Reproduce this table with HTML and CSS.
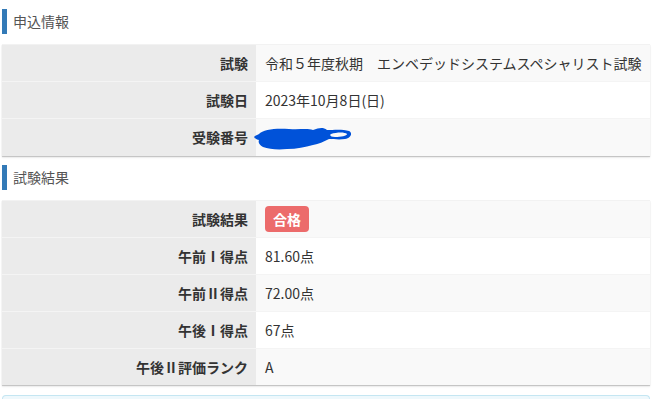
FILE: index.html
```html
<!DOCTYPE html>
<html lang="ja">
<head>
<meta charset="utf-8">
<title>申込情報</title>
<link rel="stylesheet" href="styles.css">
</head>
<body>
<div class="page">
  <h2 class="section-title">申込情報</h2>
  <table class="info-table">
    <tr><th>試験</th><td>令和５年度秋期　エンベデッドシステムスペシャリスト試験</td></tr>
    <tr><th>試験日</th><td>2023年10月8日(日)</td></tr>
    <tr><th>受験番号</th><td class="redacted-cell"><svg class="redact" width="100" height="26" viewBox="0 0 100 26"><path d="M6 9 C10 4 24 3 36 4 C46 5 54 3 60 5 C66 3 70 2 74 5 C80 5 90 4 96 6 C100 8 98 13 92 14 C86 15 80 14 76 14 C70 17 66 19 60 20 C52 22 44 24 34 24 C24 25 16 24 10 22 C6 20 5 17 6 15 C2 14 0 12 2 11 C3 10 5 10 6 9 Z M78 9 C76 10 78 12 82 12 C88 12 94 11 94 9 C92 7 84 7 78 9 Z" fill="#0052d9" fill-rule="evenodd"/></svg></td></tr>
  </table>

  <h2 class="section-title">試験結果</h2>
  <table class="info-table">
    <tr><th>試験結果</th><td><span class="badge">合格</span></td></tr>
    <tr><th>午前Ⅰ得点</th><td>81.60点</td></tr>
    <tr><th>午前Ⅱ得点</th><td>72.00点</td></tr>
    <tr><th>午後Ⅰ得点</th><td>67点</td></tr>
    <tr><th>午後Ⅱ評価ランク</th><td>A</td></tr>
  </table>

  <div class="notice"></div>
</div>
</body>
</html>
```

FILE: styles.css
```css
* { box-sizing: border-box; }
html, body {
  margin: 0;
  padding: 0;
  background: #ffffff;
}
body {
  font-family: "Noto Sans CJK JP", "Noto Sans", sans-serif;
  font-size: 14px;
  color: #333333;
}
.page {
  padding: 0 2px;
}
.section-title {
  margin: 9px 0 10px 0;
  height: 25px;
  line-height: 25px;
  border-left: 5px solid #337ab7;
  padding-left: 6px;
  font-size: 14px;
  font-weight: normal;
  color: #555555;
}
.info-table {
  width: 648px;
  border-collapse: collapse;
  box-shadow: 0 1px 1px rgba(0,0,0,0.18), 0 2px 2px rgba(0,0,0,0.06);
}
.info-table th,
.info-table td {
  height: 37px;
  padding: 0;
  vertical-align: middle;
  border-top: 1px solid #f4f4f4;
}
.info-table tr:first-child th,
.info-table tr:first-child td {
  border-top: 1px solid #f2f2f2;
}
.info-table th {
  width: 254px;
  background: #ebebeb;
  text-align: right;
  padding-right: 8px;
  font-weight: bold;
  color: #333333;
}
.info-table td {
  background: #ffffff;
  padding-left: 9px;
  text-align: left;
}
.info-table tr:nth-child(odd) td {
  background: #f9f9f9;
}
.redacted-cell {
  line-height: 0;
}
.redact {
  display: inline-block;
  vertical-align: middle;
  margin-left: -12px;
  margin-top: 2px;
}
.badge {
  display: inline-block;
  background: #ec6b6b;
  color: #ffffff;
  font-weight: bold;
  padding: 0 8px;
  height: 26px;
  line-height: 26px;
  border-radius: 4px;
  margin-top: 1px;
}
.notice {
  margin-top: 10px;
  height: 4px;
  background: #eef8fc;
  border: 1px solid #c4e6f2;
  border-bottom: 0;
  border-radius: 4px 4px 0 0;
}
```
